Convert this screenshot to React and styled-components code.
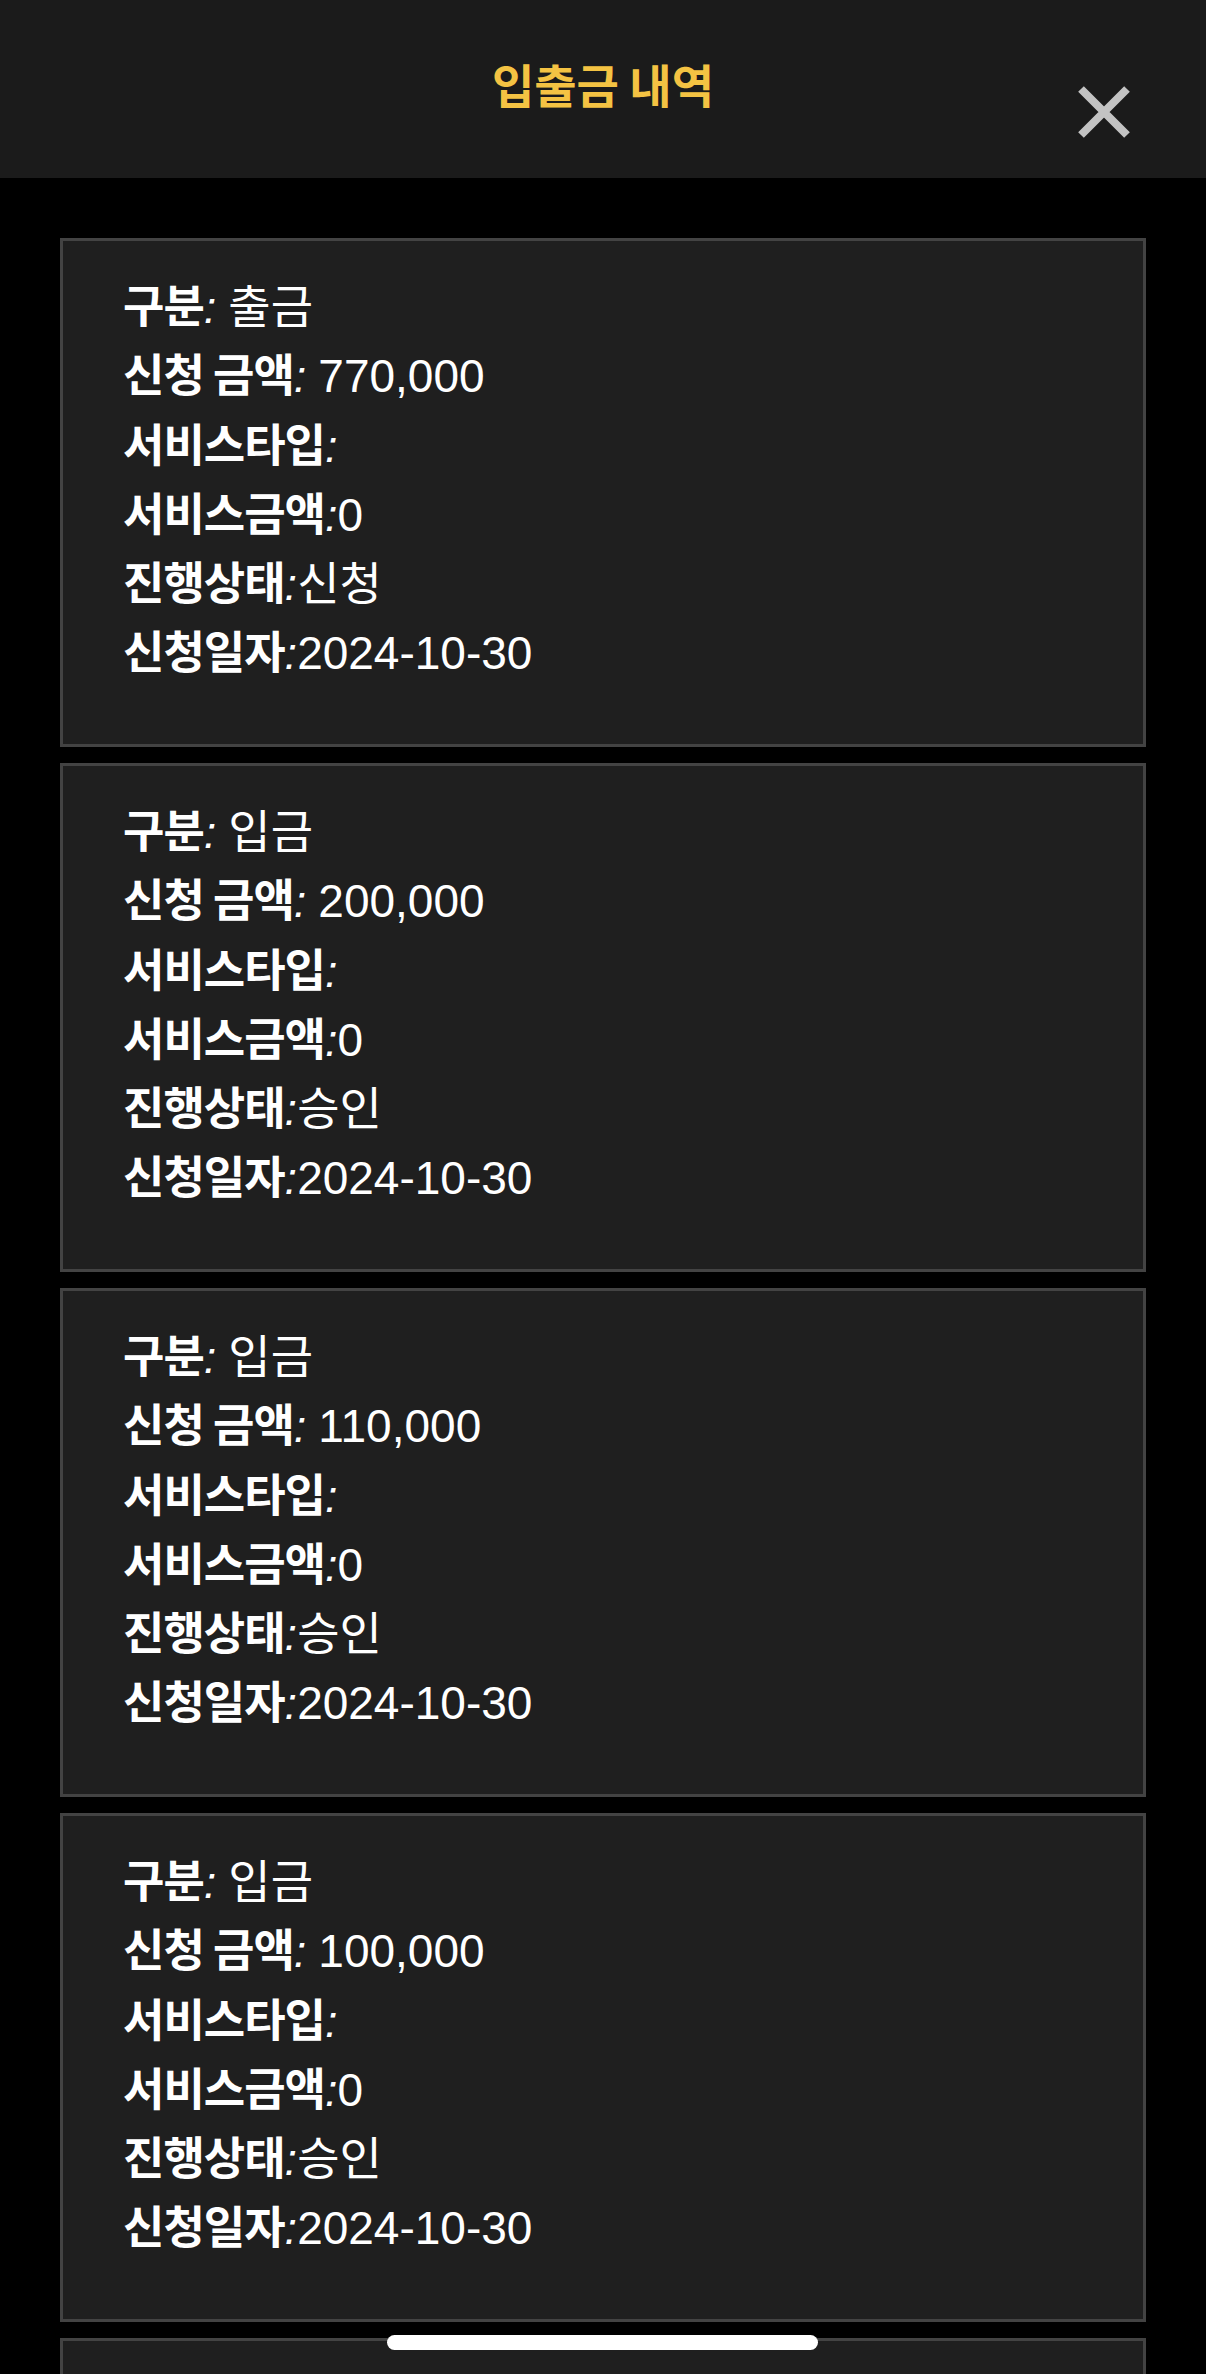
import React from 'react';
import styled, { createGlobalStyle } from 'styled-components';

const GlobalStyle = createGlobalStyle`
  html, body {
    margin: 0;
    padding: 0;
    background: #000;
    overflow: hidden;
  }
  body {
    font-family: "Liberation Sans", "Noto Sans CJK KR", sans-serif;
    color: #fff;
  }
`;

const Page = styled.div`
  width: 1206px;
  height: 2374px;
  background: #000;
  overflow: hidden;
  position: relative;
`;

const Header = styled.header`
  height: 178px;
  background: #1b1b1b;
  display: flex;
  align-items: flex-start;
  justify-content: center;
  position: relative;
`;

const Title = styled.h1`
  margin: 0;
  padding-top: 56px;
  font-family: "Noto Sans CJK KR", sans-serif;
  font-size: 46px;
  font-weight: 700;
  color: #f4c343;
  letter-spacing: 0;
  line-height: 1.2;
`;

const CloseButton = styled.button`
  position: absolute;
  right: 76px;
  top: 86px;
  width: 52px;
  height: 52px;
  padding: 0;
  border: 0;
  background: transparent;
  cursor: pointer;
  display: flex;
`;

const List = styled.main`
  display: flex;
  flex-direction: column;
  gap: 16px;
  padding: 60px 60px 0;
`;

const Card = styled.section`
  background: #1f1f1f;
  border: 3px solid #434343;
  height: 509px;
  flex-shrink: 0;
  box-sizing: border-box;
  padding: 28px 60px 0;
`;

const Row = styled.div`
  height: 69.3px;
  font-size: 45px;
  line-height: 69px;
  white-space: nowrap;
  overflow: visible;
`;

const Label = styled.span`
  font-family: "Noto Sans CJK KR", sans-serif;
  font-weight: 700;
  letter-spacing: -1px;
`;

const Colon = styled.i`
  font-style: italic;
  margin-right: ${(p) => (p.$space ? '12px' : '0')};
`;

const Value = styled.span`
  font-size: 46px;
  font-weight: 400;
`;

const HomeBar = styled.div`
  position: absolute;
  left: 387px;
  top: 2335px;
  width: 431px;
  height: 15px;
  border-radius: 8px;
  background: #fff;
`;

const items = [
  { type: '출금', amount: '770,000', status: '신청', date: '2024-10-30' },
  { type: '입금', amount: '200,000', status: '승인', date: '2024-10-30' },
  { type: '입금', amount: '110,000', status: '승인', date: '2024-10-30' },
  { type: '입금', amount: '100,000', status: '승인', date: '2024-10-30' },
];

const CloseIcon = () => (
  <svg width="52" height="52" viewBox="0 0 52 52">
    <path d="M3 3 L49 49 M49 3 L3 49" stroke="#c3c3c3" strokeWidth="8" />
  </svg>
);

const Field = ({ label, value, space }) => (
  <Row>
    <Label>{label}</Label>
    <Colon $space={space}>:</Colon>
    <Value>{value}</Value>
  </Row>
);

export default function App() {
  return (
    <Page>
      <GlobalStyle />
      <Header>
        <Title>입출금 내역</Title>
        <CloseButton aria-label="닫기">
          <CloseIcon />
        </CloseButton>
      </Header>
      <List>
        {items.map((it, i) => (
          <Card key={i}>
            <Field label="구분" value={it.type} space />
            <Field label="신청 금액" value={it.amount} space />
            <Field label="서비스타입" value="" />
            <Field label="서비스금액" value="0" />
            <Field label="진행상태" value={it.status} />
            <Field label="신청일자" value={it.date} />
          </Card>
        ))}
        {/* next item, scrolled below the fold */}
        <Card />
      </List>
      <HomeBar />
    </Page>
  );
}
